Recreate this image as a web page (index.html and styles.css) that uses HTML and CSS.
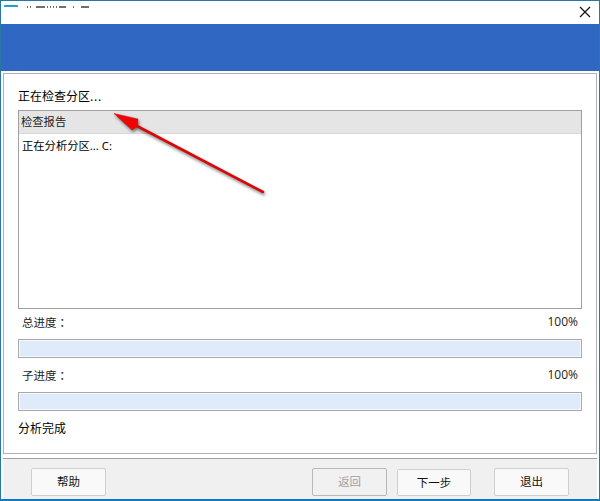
FILE: index.html
```
<!DOCTYPE html>
<html lang="zh-CN">
<head>
<meta charset="utf-8">
<title>检查分区</title>
<link rel="stylesheet" href="styles.css">
</head>
<body>
<div class="window">
  <header class="titlebar">
    <svg class="title-mark" width="110" height="12" viewBox="0 0 110 12">
      <path class="logo" d="M4 7V6q0-1 1-1h12q1 0 1 1v1z"/>
      <path class="marks" d="M27 7h1M30 7h1M36 7h9M47 7h1M50 7h1M53 7h1M56 7h1M59 7h7M73 7h1M81 7h8"/>
    </svg>
    <svg class="close" width="12" height="12" viewBox="0 0 12 12"><path d="M1 1l10 10M11 1L1 11"/></svg>
  </header>
  <div class="banner"></div>
  <main class="panel">
    <h1 class="heading">正在检查分区<span class="dots">...</span></h1>
    <section class="report">
      <div class="report-head">检查报告</div>
      <div class="report-row">正在分析分区... C:</div>
    </section>
    <div class="label"><span>总进度<span class="colon" lang="zh-TW">：</span></span><span class="pct">100%</span></div>
    <div class="bar"></div>
    <div class="label second"><span>子进度<span class="colon" lang="zh-TW">：</span></span><span class="pct">100%</span></div>
    <div class="bar"></div>
    <div class="status">分析完成</div>
  </main>
  <footer class="footer">
    <button class="btn help">帮助</button>
    <button class="btn back" disabled>返回</button>
    <button class="btn next">下一步</button>
    <button class="btn exit">退出</button>
  </footer>
  <svg class="arrow" width="170" height="100" viewBox="0 0 170 100">
    <path class="shaft" d="M31 21L157 87"/>
    <path class="tip" d="M8 8.500L32 14L31.500 21.500L26 25Z"/>
  </svg>
</div>
</body>
</html>
```
FILE: styles.css
```
* { box-sizing: border-box; }
body {
  margin: 0;
  font: 12px/16px "Noto Sans", "Noto Sans CJK SC", sans-serif;
  color: #222;
}
.window {
  position: relative;
  width: 600px;
  height: 501px;
  border: 1px solid #2878a0;
  border-bottom: 2px solid #1478c0;
  background: #fff;
  display: flex;
  flex-direction: column;
}
.titlebar {
  height: 23px;
  display: flex;
  justify-content: space-between;
  padding-right: 8px;
}
.title-mark { margin: -1px 0 0 -1px; }
.logo { fill: #1c9fd4; }
.marks { stroke: #707070; stroke-width: 2; fill: none; }
.close { margin-top: 5px; }
.close path { stroke: #111; stroke-width: 1.2; fill: none; }
.banner { height: 47px; background: #3067c2; }
.panel {
  height: 381px;
  margin: 2px 2px 0;
  padding: 15px 14px 0;
  border: 1px solid #b0b0b0;
}
.heading {
  margin: 0;
  font-size: 12px;
  font-weight: 400;
  line-height: 16px;
  color: #000;
}
.dots { letter-spacing: .8px; }
.report {
  height: 199px;
  margin-top: 5px;
  border: 1px solid #a0a0a0;
}
.report-head {
  height: 23px;
  padding-left: 2px;
  line-height: 22px;
  font-size: 11.300px;
  background: #e5e5e5;
  border-bottom: 1px solid #d8d8d8;
}
.report-row { padding: 4px 0 0 3px; color: #000; font-size: 11.300px; }
.label {
  display: flex;
  justify-content: space-between;
  height: 30px;
  padding: 5px 4px 0;
  font-size: 11.500px;
}
.colon { font-family: "Noto Sans CJK TC", sans-serif; }
.pct { font-family: "Open Sans", sans-serif; font-size: 12px; }
.bar {
  height: 19px;
  border: 1px solid #a7a9ac;
  background: #dfebfb;
  box-shadow: inset 0 0 0 1px #f5f9ff;
}
.second { height: 34px; padding-top: 9px; }
.status { margin-top: 10px; color: #000; }
.footer {
  flex: 1;
  display: flex;
  align-items: flex-start;
  margin: 4px 2px 0 2px;
  padding: 9px 0 0 28px;
  border-top: 1px solid #a0a0a0;
  background: #f0f0f0;
}
.btn {
  width: 75px;
  height: 28px;
  padding: 0;
  border: 1px solid #cfcfcf;
  border-radius: 2px;
  background: #f9f9f9;
  color: #111;
  font: 11.500px/16px "Noto Sans", "Noto Sans CJK SC", sans-serif;
}
.back { margin-left: 206px; border-color: #b8b8b8; background: #f1f1f1; color: #a0a0a0; }
.next { width: 74px; height: 27px; margin: 1px 0 0 10px; }
.exit { margin-left: 23px; }
.arrow {
  position: absolute;
  left: 105px;
  top: 104px;
  filter: drop-shadow(1px 2px 1.500px rgba(0, 0, 0, .5));
}
.shaft { stroke: #d90808; stroke-width: 2.600; stroke-linecap: round; }
.tip { fill: #f00505; stroke: #d90808; stroke-width: .5; }
```
